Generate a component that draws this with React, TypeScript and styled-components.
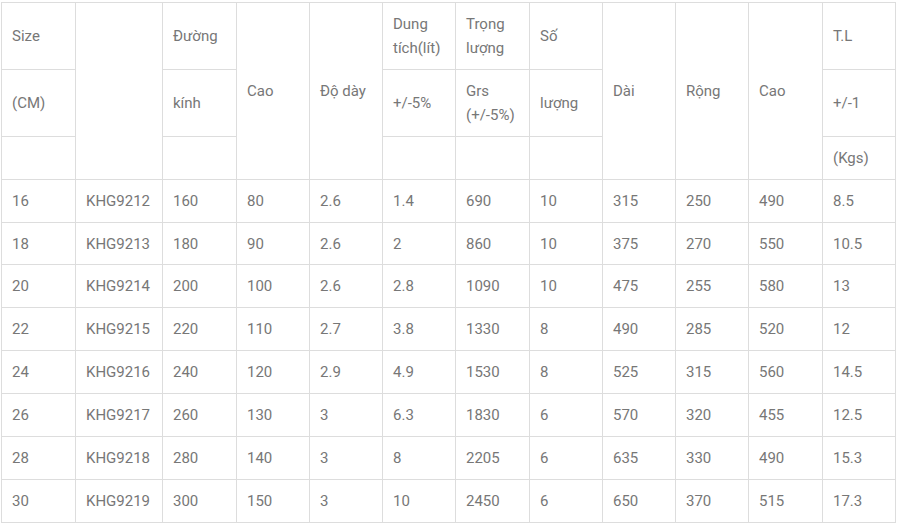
import React from "react";
import styled, { createGlobalStyle } from "styled-components";

const Global = createGlobalStyle`
  html, body { margin: 0; padding: 0; background: #fff; }
  body { font-family: Roboto, "Noto Sans", Arial, sans-serif; }
`;

const Page = styled.div`
  padding: 2px 0 0 1px;
`;

const Table = styled.table`
  border-collapse: collapse;
  table-layout: fixed;
  width: 895px;
  font-family: Roboto, "Noto Sans", Arial, sans-serif;
  font-size: 15px;
  line-height: 24px;
  color: #777;
`;

const Cell = styled.td`
  border: 1px solid #ddd;
  padding: 9px 10px 8.875px 10px;
  vertical-align: middle;
  text-align: left;
  font-weight: 400;
  word-wrap: break-word;
`;

const widths = [74, 87, 74, 73, 73, 73, 74, 73, 73, 73, 74, 73];

const rows: string[][] = [
  ["16", "KHG9212", "160", "80", "2.6", "1.4", "690", "10", "315", "250", "490", "8.5"],
  ["18", "KHG9213", "180", "90", "2.6", "2", "860", "10", "375", "270", "550", "10.5"],
  ["20", "KHG9214", "200", "100", "2.6", "2.8", "1090", "10", "475", "255", "580", "13"],
  ["22", "KHG9215", "220", "110", "2.7", "3.8", "1330", "8", "490", "285", "520", "12"],
  ["24", "KHG9216", "240", "120", "2.9", "4.9", "1530", "8", "525", "315", "560", "14.5"],
  ["26", "KHG9217", "260", "130", "3", "6.3", "1830", "6", "570", "320", "455", "12.5"],
  ["28", "KHG9218", "280", "140", "3", "8", "2205", "6", "635", "330", "490", "15.3"],
  ["30", "KHG9219", "300", "150", "3", "10", "2450", "6", "650", "370", "515", "17.3"],
];

export default function App() {
  return (
    <Page>
      <Global />
      <Table>
        <colgroup>
          {widths.map((w, i) => (
            <col key={i} style={{ width: w }} />
          ))}
        </colgroup>
        <tbody>
          <tr>
            <Cell>Size</Cell>
            <Cell rowSpan={3}></Cell>
            <Cell>Đường</Cell>
            <Cell rowSpan={3}>Cao</Cell>
            <Cell rowSpan={3}>Độ dày</Cell>
            <Cell>Dung tích(lít)</Cell>
            <Cell>Trọng lượng</Cell>
            <Cell>Số</Cell>
            <Cell rowSpan={3}>Dài</Cell>
            <Cell rowSpan={3}>Rộng</Cell>
            <Cell rowSpan={3}>Cao</Cell>
            <Cell>T.L</Cell>
          </tr>
          <tr>
            <Cell>(CM)</Cell>
            <Cell>kính</Cell>
            <Cell>+/-5%</Cell>
            <Cell>Grs (+/-5%)</Cell>
            <Cell>lượng</Cell>
            <Cell>+/-1</Cell>
          </tr>
          <tr>
            <Cell></Cell>
            <Cell></Cell>
            <Cell></Cell>
            <Cell></Cell>
            <Cell></Cell>
            <Cell>(Kgs)</Cell>
          </tr>
          {rows.map((r, i) => (
            <tr key={i}>
              {r.map((v, j) => (
                <Cell key={j}>{v}</Cell>
              ))}
            </tr>
          ))}
        </tbody>
      </Table>
    </Page>
  );
}
